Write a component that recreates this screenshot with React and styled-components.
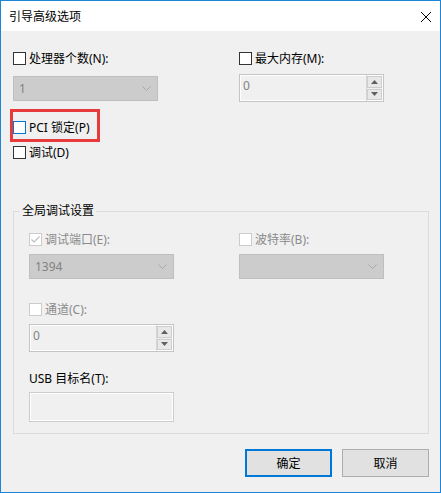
import React from "react";
import styled, { createGlobalStyle } from "styled-components";

const GlobalStyle = createGlobalStyle`
  html, body {
    margin: 0;
    padding: 0;
    background: #ffffff;
  }
  body {
    font-family: "Noto Sans", "Noto Sans CJK SC", sans-serif;
    font-size: 12px;
  }
  * {
    box-sizing: border-box;
  }
`;

const Window = styled.div`
  width: 441px;
  height: 493px;
  border: 1px solid #1b85d8;
  background: #f0f0f0;
  display: flex;
  flex-direction: column;
`;

const TitleBar = styled.div`
  height: 30px;
  background: #ffffff;
  display: flex;
  align-items: center;
  justify-content: space-between;
  padding: 0 9px 0 8px;
  color: #000;
  font-size: 12px;
`;

const CloseButton = styled.svg`
  width: 10px;
  height: 10px;
  margin-top: 1px;
`;

const Body = styled.div`
  flex: 1;
  padding: 19px 11px 0 12px;
  display: flex;
  flex-direction: column;
`;

const Grid = styled.div`
  display: grid;
  grid-template-columns: 145px 145px;
  column-gap: ${(p) => p.$gap}px;
  align-items: start;
`;

const Column = styled.div`
  display: flex;
  flex-direction: column;
`;

const CheckRow = styled.label`
  display: flex;
  align-items: center;
  gap: 3px;
  height: 17px;
  line-height: 17px;
  margin-top: ${(p) => p.$mt || 0}px;
  color: ${(p) => (p.$disabled ? "#8a8a8a" : "#000000")};
  white-space: nowrap;
`;

const Box = styled.span`
  width: 13px;
  height: 13px;
  flex: none;
  border: 1px solid ${(p) => p.$border};
  background: #ffffff;
  display: flex;
  align-items: center;
  justify-content: center;
`;

const Label = styled.div`
  height: 17px;
  line-height: 17px;
  margin-top: ${(p) => p.$mt || 0}px;
  color: #000;
`;

const Select = styled.div`
  height: 25px;
  margin-top: ${(p) => p.$mt || 0}px;
  border: 1px solid #bfbfbf;
  background: #cccccc;
  color: #838383;
  display: flex;
  align-items: center;
  justify-content: space-between;
  padding: 0 6px 0 5px;
`;

const Spinner = styled.div`
  height: 28px;
  margin-top: ${(p) => p.$mt || 0}px;
  border: 1px solid #c4c4c4;
  background: #f0f0f0;
  display: flex;
  box-shadow: inset 0 0 0 1px #ffffff;
`;

const SpinValue = styled.div`
  flex: 1;
  padding: 3px 0 0 3px;
  color: #838383;
  line-height: 16px;
`;

const SpinButtons = styled.div`
  width: 17px;
  border-left: 1px solid #d6d6d6;
  padding: 1px 1px 1px 0;
  display: flex;
  flex-direction: column;
  gap: 1px;
`;

const SpinButton = styled.div`
  height: 12px;
  border: 1px solid #cdcdcd;
  background: #e8e8e8;
  display: flex;
  align-items: center;
  justify-content: center;
`;

const TextBox = styled.div`
  height: 30px;
  margin-top: ${(p) => p.$mt || 0}px;
  border: 1px solid #cccccc;
  box-shadow: inset 0 0 0 1px #ffffff;
  background: #f0f0f0;
`;

const Highlight = styled.div`
  width: 90px;
  height: 33px;
  margin: 7px 0 0 -3px;
  border: 3px solid #e8393b;
  padding-top: 7px;
`;

const Group = styled.fieldset`
  width: 416px;
  margin: 42px 0 0 0;
  padding: 12px 15px 11px;
  border: 1px solid #dcdcdc;
  min-width: 0;
`;

const Legend = styled.legend`
  padding: 0 2px;
  margin-left: -9px;
  line-height: 16px;
  color: #000;
`;

const Buttons = styled.div`
  display: flex;
  justify-content: flex-end;
  gap: 10px;
  margin-top: 15px;
`;

const Button = styled.button`
  width: 87px;
  height: 28px;
  background: #e1e1e1;
  border: ${(p) => (p.$primary ? "2px solid #0078d7" : "1px solid #adadad")};
  font: inherit;
  font-size: 12px;
  color: #000;
  padding: 0;
`;

const Check = ({ checked, border = "#333333", disabled, children, mt }) => (
  <CheckRow $disabled={disabled} $mt={mt}>
    <Box $border={border}>
      {checked && (
        <svg width="11" height="11" viewBox="0 0 11 11">
          <path d="M1.5 5.5 L4 8 L9.5 2.5" fill="none" stroke="#bdbdbd" strokeWidth="1.2" />
        </svg>
      )}
    </Box>
    {children}
  </CheckRow>
);

const Chevron = () => (
  <svg width="9" height="5" viewBox="0 0 9 5">
    <path d="M0.5 0.5 L4.5 4.5 L8.5 0.5" fill="none" stroke="#a9a9a9" strokeWidth="1" />
  </svg>
);

const SpinBox = ({ value, mt }) => (
  <Spinner $mt={mt}>
    <SpinValue>{value}</SpinValue>
    <SpinButtons>
      <SpinButton>
        <svg width="7" height="4" viewBox="0 0 7 4">
          <path d="M0 4 L3.5 0 L7 4Z" fill="#606060" />
        </svg>
      </SpinButton>
      <SpinButton>
        <svg width="7" height="4" viewBox="0 0 7 4">
          <path d="M0 0 L3.5 4 L7 0Z" fill="#606060" />
        </svg>
      </SpinButton>
    </SpinButtons>
  </Spinner>
);

export default function App() {
  return (
    <>
      <GlobalStyle />
      <Window>
        <TitleBar>
          <span>引导高级选项</span>
          <CloseButton viewBox="0 0 10 10">
            <path d="M0 0 L10 10 M10 0 L0 10" stroke="#000" strokeWidth="1" />
          </CloseButton>
        </TitleBar>
        <Body>
          <Grid $gap={81}>
            <Column>
              <Check>处理器个数(N):</Check>
              <Select $mt={9}>
                <span>1</span>
                <Chevron />
              </Select>
            </Column>
            <Column>
              <Check>最大内存(M):</Check>
              <SpinBox value="0" mt={7} />
            </Column>
          </Grid>

          <Highlight>
            <Check border="#0078d7">PCI 锁定(P)</Check>
          </Highlight>
          <Check mt={2}>调试(D)</Check>

          <Group>
            <Legend>全局调试设置</Legend>
            <Grid $gap={65}>
              <Column>
                <Check checked disabled border="#cccccc">
                  调试端口(E):
                </Check>
                <Select $mt={6}>
                  <span>1394</span>
                  <Chevron />
                </Select>
                <Check disabled border="#cccccc" mt={22}>
                  通道(C):
                </Check>
                <SpinBox value="0" mt={6} />
                <Label $mt={18}>USB 目标名(T):</Label>
                <TextBox $mt={5} />
              </Column>
              <Column>
                <Check disabled border="#cccccc">
                  波特率(B):
                </Check>
                <Select $mt={6}>
                  <span />
                  <Chevron />
                </Select>
              </Column>
            </Grid>
          </Group>

          <Buttons>
            <Button $primary>确定</Button>
            <Button>取消</Button>
          </Buttons>
        </Body>
      </Window>
    </>
  );
}
